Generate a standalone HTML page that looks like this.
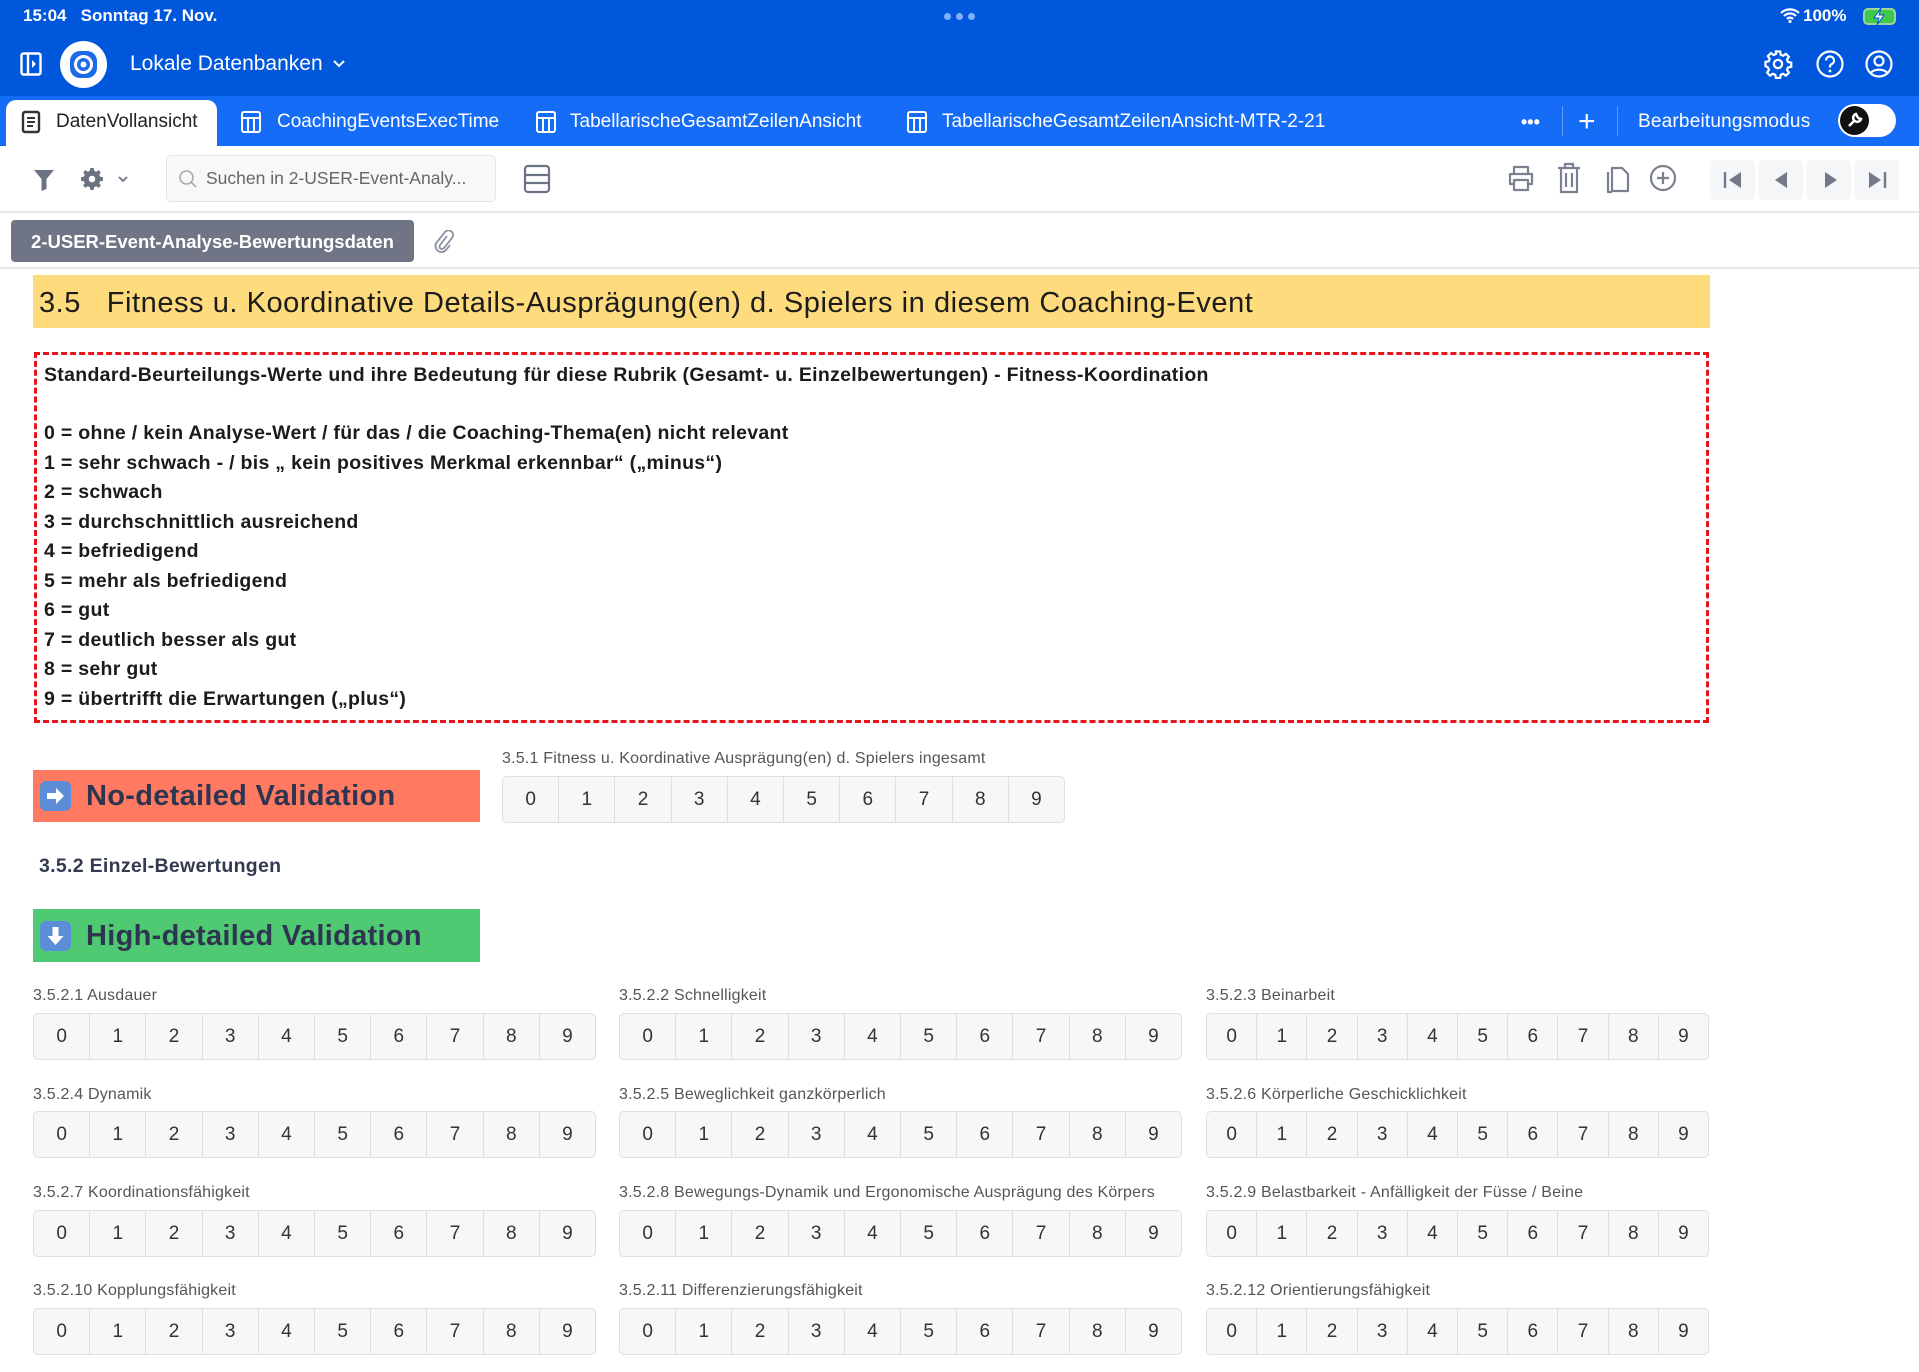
<!DOCTYPE html>
<html><head><meta charset="utf-8">
<style>
*{box-sizing:border-box;margin:0;padding:0}
body{width:1919px;height:1372px;position:relative;background:#fff;font-family:"Liberation Sans","DejaVu Sans",sans-serif;overflow:hidden;color:#222}
.a{position:absolute}
.w{color:#fff}
.tab{position:absolute;top:96px;height:50px;line-height:52px;font-size:19px;color:#fff;white-space:nowrap}
.grp{position:absolute;display:flex;border:1px solid #dedfe2;border-radius:5px;background:#f7f7f8;overflow:hidden}
.grp div{flex:1;text-align:center;border-left:1px solid #dedfe2;font-size:19px;color:#333}
.grp div:first-child{border-left:none}
.lbl{position:absolute;font-size:16px;color:#555;white-space:nowrap;letter-spacing:0.2px}
.line{position:absolute;left:44px;font-size:19.5px;font-weight:bold;color:#1b1b1b;white-space:nowrap;letter-spacing:0.3px}
.nav{position:absolute;top:160px;width:45px;height:40px;background:#f5f6f7;border-radius:4px}
</style></head><body>
<div class="a" style="left:0;top:0;width:1919px;height:96px;background:#0057dc"></div>
<div class="a" style="left:0;top:96px;width:1919px;height:50px;background:#156cf6"></div>
<div class="a w" style="left:23px;top:6px;font-size:17px;font-weight:bold">15:04&nbsp;&nbsp; Sonntag 17. Nov.</div>
<div class="a" style="left:944px;top:13px;display:flex;gap:5px"><span style="width:7px;height:7px;border-radius:50%;background:#7fb0ff"></span><span style="width:7px;height:7px;border-radius:50%;background:#7fb0ff"></span><span style="width:7px;height:7px;border-radius:50%;background:#7fb0ff"></span></div>
<svg class="a" style="left:1780px;top:7px" width="20" height="16" viewBox="0 0 20 16"><path d="M1 6a13 13 0 0 1 18 0M4 9a8.5 8.5 0 0 1 12 0M7 12a4 4 0 0 1 6 0" stroke="#fff" stroke-width="2.2" fill="none"/><circle cx="10" cy="14.5" r="1.6" fill="#fff"/></svg>
<div class="a w" style="left:1803px;top:6px;font-size:17px;font-weight:bold">100%</div>
<div class="a" style="left:1863px;top:8px;width:33px;height:17px;border:2px solid #9fd49a;border-radius:5px;background:#3fc84a"></div>
<svg class="a" style="left:1872px;top:8px" width="14" height="17" viewBox="0 0 14 17"><path d="M9 0L2 10h5l-2 7 7-10H7z" fill="#fff" stroke="#0057dc" stroke-width="1"/></svg>

<svg class="a" style="left:20px;top:52px" width="22" height="24" viewBox="0 0 22 24"><rect x="1.5" y="1.5" width="19" height="21" rx="2" stroke="#fff" stroke-width="2.4" fill="none"/><line x1="8" y1="2" x2="8" y2="22" stroke="#fff" stroke-width="2.4"/><path d="M12 8l4 4-4 4z" fill="#fff"/></svg>
<div class="a" style="left:60px;top:41px;width:47px;height:47px;border-radius:50%;background:#fff"></div>
<svg class="a" style="left:68px;top:49px" width="31" height="31" viewBox="0 0 31 31"><rect x="2" y="2" width="27" height="27" rx="10" fill="#1c6ae8"/><circle cx="15.5" cy="15.5" r="8" fill="none" stroke="#fff" stroke-width="3"/><circle cx="15.5" cy="15.5" r="3" fill="#fff"/></svg>
<div class="a w" style="left:130px;top:52px;font-size:21px">Lokale Datenbanken</div>
<svg class="a" style="left:332px;top:59px" width="14" height="10" viewBox="0 0 14 10"><path d="M2 2l5 5 5-5" stroke="#fff" stroke-width="2" fill="none"/></svg>
<svg class="a" style="left:1763px;top:49px" width="30" height="30" viewBox="0 0 24 24"><path d="M10.3 2h3.4l.5 2.6 1.9.8 2.2-1.5 2.4 2.4-1.5 2.2.8 1.9 2.6.5v3.4l-2.6.5-.8 1.9 1.5 2.2-2.4 2.4-2.2-1.5-1.9.8-.5 2.6h-3.4l-.5-2.6-1.9-.8-2.2 1.5-2.4-2.4 1.5-2.2-.8-1.9L2 13.7v-3.4l2.6-.5.8-1.9-1.5-2.2 2.4-2.4 2.2 1.5 1.9-.8z" fill="none" stroke="#fff" stroke-width="1.8"/><circle cx="12" cy="12" r="3.3" fill="none" stroke="#fff" stroke-width="1.8"/></svg>
<svg class="a" style="left:1815px;top:49px" width="30" height="30" viewBox="0 0 30 30"><circle cx="15" cy="15" r="12.5" stroke="#fff" stroke-width="2.2" fill="none"/><path d="M11 11.5a4 4 0 1 1 5.5 3.7c-1 .5-1.5 1.2-1.5 2.3v1" stroke="#fff" stroke-width="2.2" fill="none"/><circle cx="15" cy="22" r="1.4" fill="#fff"/></svg>
<svg class="a" style="left:1864px;top:49px" width="30" height="30" viewBox="0 0 30 30"><circle cx="15" cy="15" r="12.5" stroke="#fff" stroke-width="2.2" fill="none"/><circle cx="15" cy="12" r="4.5" stroke="#fff" stroke-width="2.2" fill="none"/><path d="M7 23.5a10 7 0 0 1 16 0" stroke="#fff" stroke-width="2.2" fill="none"/></svg>

<div class="a" style="left:6px;top:100px;width:211px;height:46px;background:#fff;border-radius:10px 10px 0 0"></div>
<svg class="a" style="left:21px;top:110px" width="20" height="24" viewBox="0 0 20 24"><rect x="2" y="2" width="16" height="20" rx="2" stroke="#333" stroke-width="2.4" fill="none"/><path d="M6 8h8M6 12h8M6 16h6" stroke="#333" stroke-width="2"/></svg>
<div class="tab" style="left:56px;color:#222">DatenVollansicht</div>
<svg class="a" style="left:240px;top:110px" width="22" height="24" viewBox="0 0 22 24"><rect x="2" y="2" width="18" height="20" rx="2" stroke="#fff" stroke-width="2" fill="none"/><path d="M2 8h18M8 8v14M14 8v14" stroke="#fff" stroke-width="2"/></svg>
<div class="tab" style="left:277px">CoachingEventsExecTime</div>
<svg class="a" style="left:535px;top:110px" width="22" height="24" viewBox="0 0 22 24"><rect x="2" y="2" width="18" height="20" rx="2" stroke="#fff" stroke-width="2" fill="none"/><path d="M2 8h18M8 8v14M14 8v14" stroke="#fff" stroke-width="2"/></svg>
<div class="tab" style="left:570px">TabellarischeGesamtZeilenAnsicht</div>
<svg class="a" style="left:906px;top:110px" width="22" height="24" viewBox="0 0 22 24"><rect x="2" y="2" width="18" height="20" rx="2" stroke="#fff" stroke-width="2" fill="none"/><path d="M2 8h18M8 8v14M14 8v14" stroke="#fff" stroke-width="2"/></svg>
<div class="tab" style="left:942px">TabellarischeGesamtZeilenAnsicht-MTR-2-21</div>
<div class="tab" style="left:1521px;font-weight:bold;font-size:18px">•••</div>
<div class="a" style="left:1562px;top:106px;width:1px;height:30px;background:#5a9bff"></div>
<div class="tab" style="left:1578px;font-size:30px">+</div>
<div class="a" style="left:1617px;top:106px;width:1px;height:30px;background:#5a9bff"></div>
<div class="tab" style="left:1638px;letter-spacing:0.2px">Bearbeitungsmodus</div>
<div class="a" style="left:1838px;top:104px;width:58px;height:33px;border-radius:17px;background:#fff"></div>
<div class="a" style="left:1840px;top:106px;width:29px;height:29px;border-radius:50%;background:#111"></div>
<svg class="a" style="left:1845px;top:111px" width="19" height="19" viewBox="0 0 19 19"><path d="M4 15l6-6M11 3a4 4 0 1 0 5 5l-2-.5-1.5-1.5z" stroke="#fff" stroke-width="2.5" fill="none"/></svg>

<svg class="a" style="left:33px;top:168px" width="22" height="24" viewBox="0 0 22 24"><path d="M1 2h20l-7.5 9v10l-5 2V11z" fill="#6b7382"/></svg>
<svg class="a" style="left:80px;top:167px" width="24" height="24" viewBox="0 0 24 24"><path d="M10.3 1h3.4l.5 2.8 2 .9 2.3-1.6 2.4 2.4-1.6 2.3.9 2 2.8.5v3.4l-2.8.5-.9 2 1.6 2.3-2.4 2.4-2.3-1.6-2 .9-.5 2.8h-3.4l-.5-2.8-2-.9-2.3 1.6-2.4-2.4 1.6-2.3-.9-2L1 13.7v-3.4l2.8-.5.9-2-1.6-2.3 2.4-2.4 2.3 1.6 2-.9z" fill="#6b7382"/><circle cx="12" cy="12" r="3.3" fill="#fff"/></svg>
<svg class="a" style="left:117px;top:175px" width="12" height="8" viewBox="0 0 12 8"><path d="M2 2l4 4 4-4" stroke="#6b7382" stroke-width="1.8" fill="none"/></svg>
<div class="a" style="left:166px;top:155px;width:330px;height:47px;border:1px solid #e2e3e6;border-radius:5px;background:#f8f8f9"></div>
<svg class="a" style="left:178px;top:169px" width="20" height="20" viewBox="0 0 20 20"><circle cx="8.5" cy="8.5" r="6.5" stroke="#aaa" stroke-width="1.6" fill="none"/><path d="M13 13l5 5" stroke="#aaa" stroke-width="1.6"/></svg>
<div class="a" style="left:206px;top:168px;font-size:17.5px;color:#666">Suchen in 2-USER-Event-Analy...</div>
<svg class="a" style="left:523px;top:164px" width="28" height="30" viewBox="0 0 28 30"><rect x="2" y="2" width="24" height="26" rx="3" stroke="#6b7382" stroke-width="2.2" fill="none"/><path d="M2 11h24M2 19h24" stroke="#6b7382" stroke-width="2.2"/></svg>
<svg class="a" style="left:1506px;top:163px" width="30" height="30" viewBox="0 0 30 30"><path d="M8 11V4h14v7M8 21H4V11h22v10h-4M8 17h14v10H8z" stroke="#7a8190" stroke-width="2.2" fill="none" stroke-linejoin="round"/></svg>
<svg class="a" style="left:1555px;top:162px" width="28" height="32" viewBox="0 0 28 32"><path d="M3 6h22M10 6V2h8v4M6 6v24h16V6M11 11v14M17 11v14" stroke="#7a8190" stroke-width="2.2" fill="none"/></svg>
<svg class="a" style="left:1603px;top:162px" width="28" height="32" viewBox="0 0 28 32"><path d="M9 6h10l6 6v17H9z M5 10v20h4" stroke="#7a8190" stroke-width="2.2" fill="none" stroke-linejoin="round"/></svg>
<svg class="a" style="left:1649px;top:164px" width="28" height="28" viewBox="0 0 28 28"><circle cx="14" cy="14" r="12" stroke="#7a8190" stroke-width="2.2" fill="none"/><path d="M14 8v12M8 14h12" stroke="#7a8190" stroke-width="2.2"/></svg>
<div class="nav" style="left:1710px"></div><div class="nav" style="left:1758px"></div><div class="nav" style="left:1806px"></div><div class="nav" style="left:1854px"></div>
<svg class="a" style="left:1722px;top:170px" width="22" height="20" viewBox="0 0 22 20"><path d="M3 2v16" stroke="#727a8a" stroke-width="2.4"/><path d="M19 2v16L7 10z" fill="#727a8a"/></svg>
<svg class="a" style="left:1771px;top:170px" width="22" height="20" viewBox="0 0 22 20"><path d="M16 2v16L4 10z" fill="#727a8a"/></svg>
<svg class="a" style="left:1819px;top:170px" width="22" height="20" viewBox="0 0 22 20"><path d="M6 2v16l12-8z" fill="#727a8a"/></svg>
<svg class="a" style="left:1866px;top:170px" width="22" height="20" viewBox="0 0 22 20"><path d="M3 2v16l12-8z" fill="#727a8a"/><path d="M19 2v16" stroke="#727a8a" stroke-width="2.4"/></svg>
<div class="a" style="left:0;top:211px;width:1919px;height:2px;background:#e8e9eb"></div>

<div class="a" style="left:11px;top:220px;width:403px;height:42px;background:#6f7585;border-radius:4px;color:#fff;font-size:18.5px;font-weight:bold;line-height:43px;text-align:center">2-USER-Event-Analyse-Bewertungsdaten</div>
<svg class="a" style="left:434px;top:230px" width="20" height="24" viewBox="0 0 20 24"><path d="M13 6l-7 9a2.5 2.5 0 0 0 4 3l8-10a4.5 4.5 0 0 0-7-6L3 12a6 6 0 0 0 9 8l4-5" stroke="#8a90a0" stroke-width="1.8" fill="none"/></svg>
<div class="a" style="left:0;top:267px;width:1919px;height:2px;background:#e8e9eb"></div>

<div class="a" style="left:33px;top:275px;width:1677px;height:53px;background:#fedc7d"></div>
<div class="a" style="left:39px;top:287px;font-size:29px;color:#1c1c1c;white-space:nowrap;letter-spacing:0.55px">3.5&nbsp;&nbsp; Fitness u. Koordinative Details-Ausprägung(en) d. Spielers in diesem Coaching-Event</div>

<div class="a" style="left:34px;top:352px;width:1675px;height:371px;border:3px dashed #e8141b"></div>
<div class="line" style="top:364px">Standard-Beurteilungs-Werte und ihre Bedeutung für diese Rubrik (Gesamt- u. Einzelbewertungen) - Fitness-Koordination</div>
<div class="line" style="top:422px">0 = ohne / kein Analyse-Wert / für das / die Coaching-Thema(en) nicht relevant</div>
<div class="line" style="top:452px">1 = sehr schwach - / bis „ kein positives Merkmal erkennbar“ („minus“)</div>
<div class="line" style="top:481px">2 = schwach</div>
<div class="line" style="top:511px">3 = durchschnittlich ausreichend</div>
<div class="line" style="top:540px">4 = befriedigend</div>
<div class="line" style="top:570px">5 = mehr als befriedigend</div>
<div class="line" style="top:599px">6 = gut</div>
<div class="line" style="top:629px">7 = deutlich besser als gut</div>
<div class="line" style="top:658px">8 = sehr gut</div>
<div class="line" style="top:688px">9 = übertrifft die Erwartungen („plus“)</div>

<div class="lbl" style="left:502px;top:750px">3.5.1 Fitness u. Koordinative Ausprägung(en) d. Spielers ingesamt</div>
<div class="grp" style="left:502px;top:776px;width:563px;height:47px;line-height:45px"><div>0</div><div>1</div><div>2</div><div>3</div><div>4</div><div>5</div><div>6</div><div>7</div><div>8</div><div>9</div></div>

<div class="a" style="left:33px;top:770px;width:447px;height:52px;background:#ff7a60"></div>
<div class="a" style="left:40px;top:781px;width:31px;height:30px;border-radius:6px;background:#5b8ed6"></div>
<svg class="a" style="left:40px;top:781px" width="31" height="30" viewBox="0 0 31 30"><path d="M7 12h9V7l8 8-8 8v-5H7z" fill="#fff"/></svg>
<div class="a" style="left:86px;top:780px;font-size:29px;font-weight:bold;color:#2e3550;letter-spacing:0.3px">No-detailed Validation</div>
<div class="a" style="left:39px;top:855px;font-size:19.5px;font-weight:bold;color:#333a50;letter-spacing:0.3px">3.5.2 Einzel-Bewertungen</div>
<div class="a" style="left:33px;top:909px;width:447px;height:53px;background:#50ca72"></div>
<div class="a" style="left:40px;top:921px;width:31px;height:30px;border-radius:6px;background:#5b8ed6"></div>
<svg class="a" style="left:40px;top:921px" width="31" height="30" viewBox="0 0 31 30"><path d="M12.5 6h6v9h5l-8 9-8-9h5z" fill="#fff"/></svg>
<div class="a" style="left:86px;top:920px;font-size:29px;font-weight:bold;color:#2e3550;letter-spacing:0.3px">High-detailed Validation</div>

<div class="lbl" style="left:33px;top:987px">3.5.2.1 Ausdauer</div>
<div class="lbl" style="left:619px;top:987px">3.5.2.2 Schnelligkeit</div>
<div class="lbl" style="left:1206px;top:987px">3.5.2.3 Beinarbeit</div>
<div class="lbl" style="left:33px;top:1086px">3.5.2.4 Dynamik</div>
<div class="lbl" style="left:619px;top:1086px">3.5.2.5 Beweglichkeit ganzkörperlich</div>
<div class="lbl" style="left:1206px;top:1086px">3.5.2.6 Körperliche Geschicklichkeit</div>
<div class="lbl" style="left:33px;top:1184px">3.5.2.7 Koordinationsfähigkeit</div>
<div class="lbl" style="left:619px;top:1184px">3.5.2.8 Bewegungs-Dynamik und Ergonomische Ausprägung des Körpers</div>
<div class="lbl" style="left:1206px;top:1184px">3.5.2.9 Belastbarkeit - Anfälligkeit der Füsse / Beine</div>
<div class="lbl" style="left:33px;top:1282px">3.5.2.10 Kopplungsfähigkeit</div>
<div class="lbl" style="left:619px;top:1282px">3.5.2.11 Differenzierungsfähigkeit</div>
<div class="lbl" style="left:1206px;top:1282px">3.5.2.12 Orientierungsfähigkeit</div>

<div class="grp" style="left:33px;top:1013px;width:563px;height:47px;line-height:45px"><div>0</div><div>1</div><div>2</div><div>3</div><div>4</div><div>5</div><div>6</div><div>7</div><div>8</div><div>9</div></div>
<div class="grp" style="left:619px;top:1013px;width:563px;height:47px;line-height:45px"><div>0</div><div>1</div><div>2</div><div>3</div><div>4</div><div>5</div><div>6</div><div>7</div><div>8</div><div>9</div></div>
<div class="grp" style="left:1206px;top:1013px;width:503px;height:47px;line-height:45px"><div>0</div><div>1</div><div>2</div><div>3</div><div>4</div><div>5</div><div>6</div><div>7</div><div>8</div><div>9</div></div>
<div class="grp" style="left:33px;top:1111px;width:563px;height:47px;line-height:45px"><div>0</div><div>1</div><div>2</div><div>3</div><div>4</div><div>5</div><div>6</div><div>7</div><div>8</div><div>9</div></div>
<div class="grp" style="left:619px;top:1111px;width:563px;height:47px;line-height:45px"><div>0</div><div>1</div><div>2</div><div>3</div><div>4</div><div>5</div><div>6</div><div>7</div><div>8</div><div>9</div></div>
<div class="grp" style="left:1206px;top:1111px;width:503px;height:47px;line-height:45px"><div>0</div><div>1</div><div>2</div><div>3</div><div>4</div><div>5</div><div>6</div><div>7</div><div>8</div><div>9</div></div>
<div class="grp" style="left:33px;top:1210px;width:563px;height:47px;line-height:45px"><div>0</div><div>1</div><div>2</div><div>3</div><div>4</div><div>5</div><div>6</div><div>7</div><div>8</div><div>9</div></div>
<div class="grp" style="left:619px;top:1210px;width:563px;height:47px;line-height:45px"><div>0</div><div>1</div><div>2</div><div>3</div><div>4</div><div>5</div><div>6</div><div>7</div><div>8</div><div>9</div></div>
<div class="grp" style="left:1206px;top:1210px;width:503px;height:47px;line-height:45px"><div>0</div><div>1</div><div>2</div><div>3</div><div>4</div><div>5</div><div>6</div><div>7</div><div>8</div><div>9</div></div>
<div class="grp" style="left:33px;top:1308px;width:563px;height:47px;line-height:45px"><div>0</div><div>1</div><div>2</div><div>3</div><div>4</div><div>5</div><div>6</div><div>7</div><div>8</div><div>9</div></div>
<div class="grp" style="left:619px;top:1308px;width:563px;height:47px;line-height:45px"><div>0</div><div>1</div><div>2</div><div>3</div><div>4</div><div>5</div><div>6</div><div>7</div><div>8</div><div>9</div></div>
<div class="grp" style="left:1206px;top:1308px;width:503px;height:47px;line-height:45px"><div>0</div><div>1</div><div>2</div><div>3</div><div>4</div><div>5</div><div>6</div><div>7</div><div>8</div><div>9</div></div>
</body></html>
